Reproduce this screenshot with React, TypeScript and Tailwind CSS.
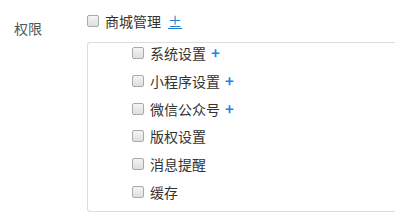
const font = { fontFamily: '"Noto Sans CJK SC", "Noto Sans", sans-serif' };

function Box() {
  return (
    <span className="w-[12px] h-[12px] shrink-0 rounded-[2px] border border-[#a9a9a9] bg-gradient-to-b from-[#f4f4f4] to-[#dedede]" />
  );
}

const items = [
  { label: "系统设置", plus: true },
  { label: "小程序设置", plus: true },
  { label: "微信公众号", plus: true },
  { label: "版权设置", plus: false },
  { label: "消息提醒", plus: false },
  { label: "缓存", plus: false },
];

export default function App() {
  return (
    <div className="w-[395px] h-[213px] bg-white overflow-hidden text-[14px] text-[#333]" style={font}>
      <div className="flex">
        <div className="w-[87px] shrink-0 pl-[14px] pt-[18px] leading-[20px] text-[#555]">权限</div>
        <div className="flex-1 pt-[10px]">
          <div className="flex items-center h-[21px] gap-[6px]">
            <Box />
            <span className="leading-[20px]">商城管理</span>
            <a className="ml-[1px] text-[#1a7ccc] underline leading-[20px]">±</a>
          </div>
          <div className="mt-[11px] w-[340px] h-[170px] border border-r-0 border-[#ddd] rounded-l-[3px] pl-[44px]">
            {items.map((it) => (
              <div key={it.label} className="h-[27.8px]">
                <div className="flex items-center h-[20px] gap-[6px]">
                  <Box />
                  <span className="leading-[20px]">{it.label}</span>
                  {it.plus && <span className="ml-[-1px] text-[15px] font-semibold text-[#1a88e0] leading-[20px]">+</span>}
                </div>
              </div>
            ))}
          </div>
        </div>
      </div>
    </div>
  );
}
